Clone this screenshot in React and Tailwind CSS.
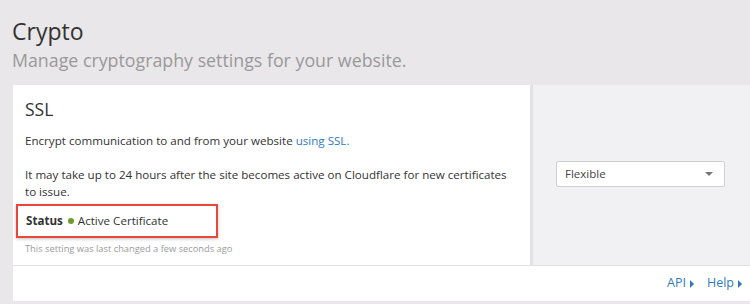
import React from 'react';

const App = () => {
  return (
    <div
      className="w-[750px] h-[304px] overflow-hidden bg-[#e9e7ea] pl-[13px]"
      style={{ fontFamily: '"Open Sans", "Liberation Sans", sans-serif' }}
    >
      {/* Header */}
      <div className="pt-[15px] h-[85px]">
        <h1 className="text-[23px] leading-[32px] text-[#333] -ml-[1px]">Crypto</h1>
        <p className="text-[17.8px] leading-[26px] text-[#999] -ml-[1px]">Manage cryptography settings for your website.</p>
      </div>

      {/* Card */}
      <div className="bg-white h-[216px]">
        <div className="flex h-[181px] border-b border-[#e2e0e3]">
          {/* Left */}
          <div className="w-[517px] px-[12px] pt-[12px]">
            <h2 className="text-[17.5px] leading-[24px] text-[#333]">SSL</h2>
            <p className="mt-[11px] text-[11.6px] leading-[17px] text-[#333]">
              Encrypt communication to and from your website <span className="text-[#2f7bbf]">using SSL.</span>
            </p>
            <p className="mt-[17px] text-[11.6px] leading-[17px] text-[#333]">
              It may take up to 24 hours after the site becomes active on Cloudflare for new certificates to issue.
            </p>
            <div className="-ml-[9px] mt-[4px] w-[202px] h-[34px] border-2 border-[#e8473b] shadow-[0_1px_3px_rgba(0,0,0,0.25)] flex items-center pl-[8px] text-[11.6px] text-[#333]">
              <span className="font-bold">Status</span>
              <span className="ml-[5px] mr-[4px] w-[6px] h-[6px] rounded-full bg-[#6c9a2e]" />
              <span>Active Certificate</span>
            </div>
            <p className="mt-[4px] text-[9.3px] leading-[13px] text-[#9a9a9a]">This setting was last changed a few seconds ago</p>
          </div>
          {/* Right */}
          <div className="flex-1 bg-[#f1f0f2] border-l-[3px] border-[#e4e2e5] flex items-center pl-[23px] pb-[2px]">
            <div className="w-[169px] h-[26px] bg-white border border-[#d0cfd1] rounded-[2px] flex items-center justify-between pl-[8px] pr-[11px] text-[11.5px] text-[#444]">
              <span>Flexible</span>
              <span className="w-0 h-0 border-l-[4px] border-r-[4px] border-t-[4px] border-l-transparent border-r-transparent border-t-[#777]" />
            </div>
          </div>
        </div>
        {/* Footer */}
        <div className="h-[35px] flex items-center justify-end pr-[8px] text-[12.5px] text-[#2f7bbf] gap-[13px]">
          <span className="flex items-center gap-[4px]">
            API
            <span className="w-0 h-0 border-t-[4px] border-b-[4px] border-l-[4px] border-t-transparent border-b-transparent border-l-[#2f7bbf]" />
          </span>
          <span className="flex items-center gap-[4px]">
            Help
            <span className="w-0 h-0 border-t-[4px] border-b-[4px] border-l-[4px] border-t-transparent border-b-transparent border-l-[#2f7bbf]" />
          </span>
        </div>
      </div>
    </div>
  );
};

export default App;
